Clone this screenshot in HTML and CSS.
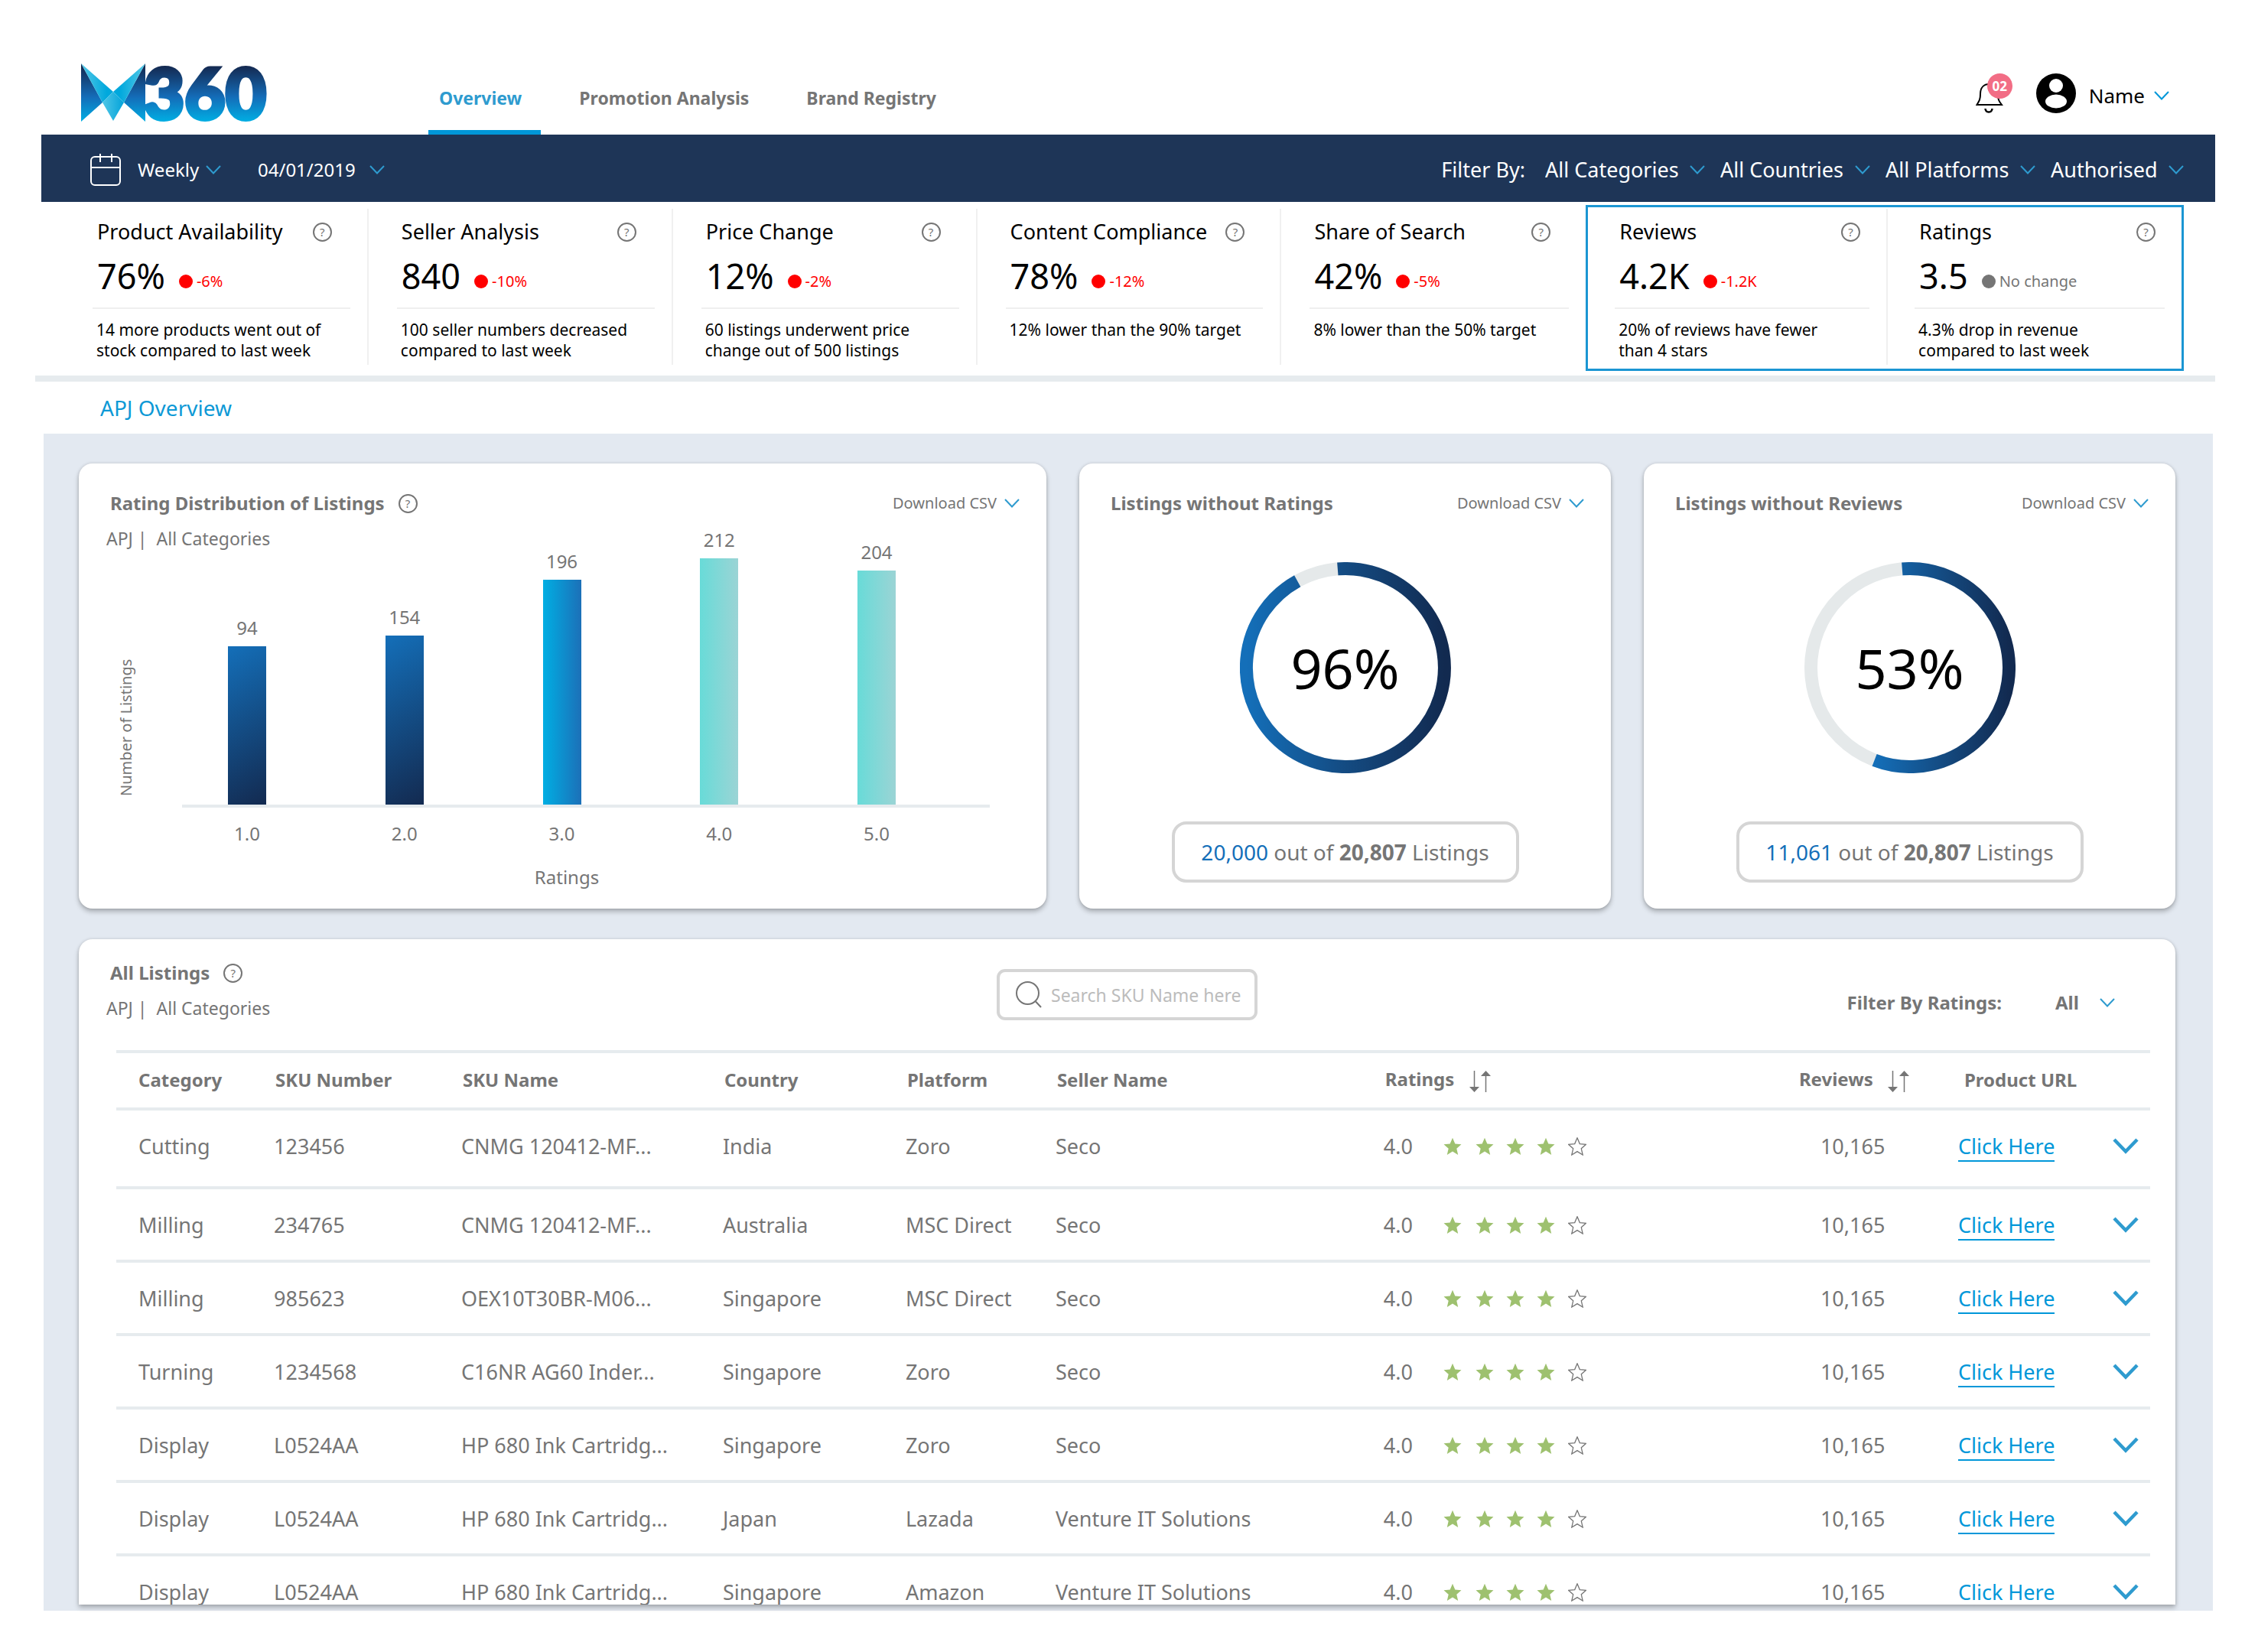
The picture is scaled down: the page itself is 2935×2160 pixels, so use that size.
FILE: index.html
```html
<!DOCTYPE html>
<html lang="en">
<head>
    <meta charset="UTF-8">
    <meta name="viewport" content="width=device-width, initial-scale=1.0">
    <title>M360 - Overview</title>
    <link rel="stylesheet" href="styles.css">
</head>
<body>
    <!-- shared icons -->
    <svg class="sprite" aria-hidden="true">
        <defs>
            <symbol id="chevron" viewBox="0 0 20 12">
                <path d="M1 1 L10 10.500 L19 1" fill="none" stroke="currentColor" stroke-width="2"/>
            </symbol>
            <symbol id="chevron-big" viewBox="0 0 34 21">
                <path d="M2 2 L17 17.500 L32 2" fill="none" stroke="currentColor" stroke-width="4.500"/>
            </symbol>
            <symbol id="sort" viewBox="0 0 28 28">
                <path d="M7 0 V22 M22 28 V6" stroke="currentColor" stroke-width="1.500"/>
                <path d="M0.500 21 H13.500 L7 28 Z M15.500 7 H28.500 L22 0 Z" fill="currentColor"/>
            </symbol>
            <symbol id="star" viewBox="0 0 24 24">
                <path d="M12 0.800 L15.300 8.600 L23.500 9.300 L17.300 14.800 L19.200 23 L12 18.600 L4.800 23 L6.700 14.800 L0.500 9.300 L8.700 8.600 Z"/>
            </symbol>
            <symbol id="rating-4" viewBox="0 0 188 24">
                <g fill="#9ec16f">
                    <use href="#star" x="0" width="24" height="24"/>
                    <use href="#star" x="42" width="24" height="24"/>
                    <use href="#star" x="82" width="24" height="24"/>
                    <use href="#star" x="122" width="24" height="24"/>
                </g>
                <use href="#star" x="163" width="24" height="24" fill="none" stroke="#757575" stroke-width="1.300"/>
            </symbol>
            <linearGradient id="ring" x1="0" x2="1" y1="0" y2="0">
                <stop offset="0" stop-color="#146fb9"/>
                <stop offset="0.500" stop-color="#144b82"/>
                <stop offset="1" stop-color="#122a50"/>
            </linearGradient>
        </defs>
    </svg>

    <header class="header">
        <a class="logo" href="#" aria-label="M360">
            <svg viewBox="0 0 256 80" width="256" height="80">
                <defs>
                    <linearGradient id="logoDark" gradientUnits="userSpaceOnUse" x1="0" y1="4" x2="0" y2="76">
                        <stop offset="0" stop-color="#142a52"/>
                        <stop offset="0.550" stop-color="#146cb8"/>
                        <stop offset="1" stop-color="#00aee3"/>
                    </linearGradient>
                    <linearGradient id="wingLeft" x1="0" x2="1" y1="0" y2="0">
                        <stop offset="0" stop-color="#54c8e6"/>
                        <stop offset="0.800" stop-color="#00a8dd"/>
                    </linearGradient>
                    <linearGradient id="wingRight" x1="1" x2="0" y1="0" y2="0">
                        <stop offset="0" stop-color="#54c8e6"/>
                        <stop offset="0.800" stop-color="#00a8dd"/>
                    </linearGradient>
                    <linearGradient id="wingMid" x1="0" x2="1" y1="0" y2="0">
                        <stop offset="0" stop-color="#4fc6e6"/>
                        <stop offset="1" stop-color="#03a3da"/>
                    </linearGradient>
                </defs>
                <path d="M0 0 L28 51 L0 76 Z M84 0 L56 51 L84 76 Z" fill="url(#logoDark)"/>
                <path d="M0 0 L42 37 L28 51 Z" fill="url(#wingLeft)"/>
                <path d="M84 0 L42 37 L56 51 Z" fill="url(#wingRight)"/>
                <path d="M42 37 L56 51 L42 75 L28 51 Z" fill="url(#wingMid)"/>
                <text class="logo-text" x="82" y="73" fill="url(#logoDark)" stroke="url(#logoDark)" stroke-width="5">360</text>
            </svg>
        </a>
        <nav class="tabs">
            <a class="tab active" href="#">Overview</a>
            <a class="tab" href="#">Promotion Analysis</a>
            <a class="tab" href="#">Brand Registry</a>
        </nav>
        <div class="user">
            <button class="bell" type="button" aria-label="Notifications">
                <svg viewBox="0 0 36 40" width="36" height="40" fill="none" stroke="#000" stroke-width="2">
                    <path d="M1.500 28 H34 C30 23 29 21 29 14 C29 5 24 1 17.500 1 C11 1 6 5 6 14 C6 21 4.500 23 1.500 28 Z"/>
                    <path d="M12.500 33 C13 39 21 39 21.500 33" stroke-width="2.500"/>
                </svg>
                <span class="badge">02</span>
            </button>
            <svg class="avatar" viewBox="0 0 52 52" width="52" height="52">
                <circle cx="26" cy="26" r="26"/>
                <circle cx="26" cy="16" r="9" fill="#fff"/>
                <ellipse cx="26" cy="36.500" rx="14" ry="9" fill="#fff"/>
            </svg>
            <button class="name" type="button">Name <svg class="chev"><use href="#chevron"/></svg></button>
        </div>
    </header>

    <div class="filter-bar">
        <svg class="calendar" viewBox="0 0 40 42" width="40" height="42" fill="none" stroke="#fff" stroke-width="2">
            <rect x="1" y="4" width="38" height="37" rx="5"/>
            <path d="M1 18 H39 M13 0 V11 M28 0 V11"/>
        </svg>
        <label class="picker period">
            <select aria-label="Period"><option>Weekly</option></select>
            <svg class="chev"><use href="#chevron"/></svg>
        </label>
        <label class="picker date">
            <select aria-label="Date"><option>04/01/2019</option></select>
            <svg class="chev"><use href="#chevron"/></svg>
        </label>
        <div class="filters">
            <span class="filters-label">Filter By:</span>
            <label class="picker">
                <select aria-label="Categories"><option>All Categories</option></select>
                <svg class="chev"><use href="#chevron"/></svg>
            </label>
            <label class="picker">
                <select aria-label="Countries"><option>All Countries</option></select>
                <svg class="chev"><use href="#chevron"/></svg>
            </label>
            <label class="picker">
                <select aria-label="Platforms"><option>All Platforms</option></select>
                <svg class="chev"><use href="#chevron"/></svg>
            </label>
            <label class="picker">
                <select aria-label="Sellers"><option>Authorised</option></select>
                <svg class="chev"><use href="#chevron"/></svg>
            </label>
        </div>
    </div>

    <section class="kpis">
        <div class="kpi">
            <div class="kpi-title">Product Availability <button class="help" type="button">?</button></div>
            <div class="kpi-value">76% <span class="delta">-6%</span></div>
            <p>14 more products went out of<br>stock compared to last week</p>
        </div>
        <div class="kpi">
            <div class="kpi-title">Seller Analysis <button class="help" type="button">?</button></div>
            <div class="kpi-value">840 <span class="delta">-10%</span></div>
            <p>100 seller numbers decreased<br>compared to last week</p>
        </div>
        <div class="kpi">
            <div class="kpi-title">Price Change <button class="help" type="button">?</button></div>
            <div class="kpi-value">12% <span class="delta">-2%</span></div>
            <p>60 listings underwent price<br>change out of 500 listings</p>
        </div>
        <div class="kpi">
            <div class="kpi-title">Content Compliance <button class="help" type="button">?</button></div>
            <div class="kpi-value">78% <span class="delta">-12%</span></div>
            <p>12% lower than the 90% target</p>
        </div>
        <div class="kpi">
            <div class="kpi-title">Share of Search <button class="help" type="button">?</button></div>
            <div class="kpi-value">42% <span class="delta">-5%</span></div>
            <p>8% lower than the 50% target</p>
        </div>
        <div class="kpi-selected">
            <div class="kpi">
                <div class="kpi-title">Reviews <button class="help" type="button">?</button></div>
                <div class="kpi-value">4.2K <span class="delta">-1.2K</span></div>
                <p>20% of reviews have fewer<br>than 4 stars</p>
            </div>
            <div class="kpi">
                <div class="kpi-title">Ratings <button class="help" type="button">?</button></div>
                <div class="kpi-value">3.5 <span class="delta same">No change</span></div>
                <p>4.3% drop in revenue<br>compared to last week</p>
            </div>
        </div>
    </section>

    <h1 class="page-title">APJ Overview</h1>

    <main class="main">
        <div class="charts">
            <section class="card">
                <div class="card-head">
                    <h2>Rating Distribution of Listings</h2>
                    <button class="help" type="button">?</button>
                    <button class="download" type="button">Download CSV <svg class="chev"><use href="#chevron"/></svg></button>
                </div>
                <div class="scope">APJ |&nbsp; All Categories</div>
                <div class="chart">
                    <div class="y-title">Number of Listings</div>
                    <div class="plot">
                        <div class="bars">
                            <div class="bar navy" style="height: 207px"><span>94</span></div>
                            <div class="bar navy" style="height: 221px"><span>154</span></div>
                            <div class="bar blue" style="height: 294px"><span>196</span></div>
                            <div class="bar teal" style="height: 322px"><span>212</span></div>
                            <div class="bar teal" style="height: 306px"><span>204</span></div>
                        </div>
                        <div class="ticks">
                            <span>1.0</span>
                            <span>2.0</span>
                            <span>3.0</span>
                            <span>4.0</span>
                            <span>5.0</span>
                        </div>
                        <div class="x-title">Ratings</div>
                    </div>
                </div>
            </section>

            <section class="card">
                <div class="card-head">
                    <h2>Listings without Ratings</h2>
                    <button class="download" type="button">Download CSV <svg class="chev"><use href="#chevron"/></svg></button>
                </div>
                <div class="donut">
                    <svg viewBox="0 0 276 276">
                        <circle cx="138" cy="138" r="129.500" fill="none" stroke="#e5e9ea" stroke-width="17"/>
                        <path d="M127.800 8.900 A129.500 129.500 0 1 1 75.200 24.700" fill="none" stroke="url(#ring)" stroke-width="17"/>
                    </svg>
                    <span>96%</span>
                </div>
                <div class="count"><em>20,000</em> out of <b>20,807</b> Listings</div>
            </section>

            <section class="card">
                <div class="card-head">
                    <h2>Listings without Reviews</h2>
                    <button class="download" type="button">Download CSV <svg class="chev"><use href="#chevron"/></svg></button>
                </div>
                <div class="donut">
                    <svg viewBox="0 0 276 276">
                        <circle cx="138" cy="138" r="129.500" fill="none" stroke="#e5e9ea" stroke-width="17"/>
                        <path d="M127.800 8.900 A129.500 129.500 0 1 1 91.600 258.900" fill="none" stroke="url(#ring)" stroke-width="17"/>
                    </svg>
                    <span>53%</span>
                </div>
                <div class="count"><em>11,061</em> out of <b>20,807</b> Listings</div>
            </section>
        </div>

        <section class="card listings">
            <div class="listings-head">
                <div>
                    <div class="card-head">
                        <h2>All Listings</h2>
                        <button class="help" type="button">?</button>
                    </div>
                    <div class="scope">APJ |&nbsp; All Categories</div>
                </div>
                <label class="search">
                    <svg viewBox="0 0 34 35" width="34" height="35" fill="none" stroke="#757575" stroke-width="2">
                        <circle cx="15.500" cy="15.500" r="14.500"/>
                        <path d="M26 26.500 L33 34"/>
                    </svg>
                    <input type="text" placeholder="Search SKU Name here" aria-label="Search SKU Name">
                </label>
                <div class="rating-filter">
                    <label for="ratingFilter">Filter By Ratings:</label>
                    <span class="picker">
                        <select id="ratingFilter"><option>All</option></select>
                        <svg class="chev"><use href="#chevron"/></svg>
                    </span>
                </div>
            </div>
            <table>
                <colgroup>
                    <col class="c-category">
                    <col class="c-number">
                    <col class="c-name">
                    <col class="c-country">
                    <col class="c-platform">
                    <col class="c-seller">
                    <col class="c-ratings">
                    <col class="c-reviews">
                    <col class="c-url">
                    <col class="c-more">
                </colgroup>
                <thead>
                    <tr>
                        <th>Category</th>
                        <th>SKU Number</th>
                        <th>SKU Name</th>
                        <th>Country</th>
                        <th>Platform</th>
                        <th>Seller Name</th>
                        <th>Ratings <svg class="sort"><use href="#sort"/></svg></th>
                        <th>Reviews <svg class="sort"><use href="#sort"/></svg></th>
                        <th colspan="2" class="th-url">Product URL</th>
                    </tr>
                </thead>
                <tbody>
                    <tr>
                        <td>Cutting</td>
                        <td>123456</td>
                        <td>CNMG 120412-MF...</td>
                        <td>India</td>
                        <td>Zoro</td>
                        <td>Seco</td>
                        <td>4.0 <svg class="stars"><use href="#rating-4"/></svg></td>
                        <td class="reviews">10,165</td>
                        <td><a href="#">Click Here</a></td>
                        <td><button class="more" type="button" aria-label="Expand"><svg><use href="#chevron-big"/></svg></button></td>
                    </tr>
                    <tr>
                        <td>Milling</td>
                        <td>234765</td>
                        <td>CNMG 120412-MF...</td>
                        <td>Australia</td>
                        <td>MSC Direct</td>
                        <td>Seco</td>
                        <td>4.0 <svg class="stars"><use href="#rating-4"/></svg></td>
                        <td class="reviews">10,165</td>
                        <td><a href="#">Click Here</a></td>
                        <td><button class="more" type="button" aria-label="Expand"><svg><use href="#chevron-big"/></svg></button></td>
                    </tr>
                    <tr>
                        <td>Milling</td>
                        <td>985623</td>
                        <td>OEX10T30BR-M06...</td>
                        <td>Singapore</td>
                        <td>MSC Direct</td>
                        <td>Seco</td>
                        <td>4.0 <svg class="stars"><use href="#rating-4"/></svg></td>
                        <td class="reviews">10,165</td>
                        <td><a href="#">Click Here</a></td>
                        <td><button class="more" type="button" aria-label="Expand"><svg><use href="#chevron-big"/></svg></button></td>
                    </tr>
                    <tr>
                        <td>Turning</td>
                        <td>1234568</td>
                        <td>C16NR AG60 Inder...</td>
                        <td>Singapore</td>
                        <td>Zoro</td>
                        <td>Seco</td>
                        <td>4.0 <svg class="stars"><use href="#rating-4"/></svg></td>
                        <td class="reviews">10,165</td>
                        <td><a href="#">Click Here</a></td>
                        <td><button class="more" type="button" aria-label="Expand"><svg><use href="#chevron-big"/></svg></button></td>
                    </tr>
                    <tr>
                        <td>Display</td>
                        <td>L0524AA</td>
                        <td>HP 680 Ink Cartridg...</td>
                        <td>Singapore</td>
                        <td>Zoro</td>
                        <td>Seco</td>
                        <td>4.0 <svg class="stars"><use href="#rating-4"/></svg></td>
                        <td class="reviews">10,165</td>
                        <td><a href="#">Click Here</a></td>
                        <td><button class="more" type="button" aria-label="Expand"><svg><use href="#chevron-big"/></svg></button></td>
                    </tr>
                    <tr>
                        <td>Display</td>
                        <td>L0524AA</td>
                        <td>HP 680 Ink Cartridg...</td>
                        <td>Japan</td>
                        <td>Lazada</td>
                        <td>Venture IT Solutions</td>
                        <td>4.0 <svg class="stars"><use href="#rating-4"/></svg></td>
                        <td class="reviews">10,165</td>
                        <td><a href="#">Click Here</a></td>
                        <td><button class="more" type="button" aria-label="Expand"><svg><use href="#chevron-big"/></svg></button></td>
                    </tr>
                    <tr>
                        <td>Display</td>
                        <td>L0524AA</td>
                        <td>HP 680 Ink Cartridg...</td>
                        <td>Singapore</td>
                        <td>Amazon</td>
                        <td>Venture IT Solutions</td>
                        <td>4.0 <svg class="stars"><use href="#rating-4"/></svg></td>
                        <td class="reviews">10,165</td>
                        <td><a href="#">Click Here</a></td>
                        <td><button class="more" type="button" aria-label="Expand"><svg><use href="#chevron-big"/></svg></button></td>
                    </tr>
                </tbody>
            </table>
        </section>
    </main>
</body>
</html>
```

FILE: styles.css
```css
* {
    box-sizing: border-box;
}
body {
    margin: 0;
    height: 100vh;
    padding: 0 39px 54px 54px;
    display: flex;
    flex-direction: column;
    overflow: hidden;
    background-color: #fff;
    color: #757575;
    font-family: "Noto Sans", "Open Sans", sans-serif;
    font-size: 27px;
}
h1, h2, p {
    margin: 0;
}
button, select, input {
    font: inherit;
    color: inherit;
    background: none;
    border: none;
    padding: 0;
    margin: 0;
}
button {
    cursor: pointer;
}
select {
    appearance: none;
}
svg {
    flex-shrink: 0;
}
.sprite {
    position: absolute;
    width: 0;
    height: 0;
}
.chev {
    width: 20px;
    height: 12px;
    color: #2e9bcf;
}

/* header */
.header {
    height: 176px;
    flex-shrink: 0;
    display: flex;
    padding: 0 60px 0 52px;
}
.logo {
    padding-top: 83px;
}
.logo svg {
    display: block;
    overflow: visible;
}
.logo-text {
    font-family: Lato, sans-serif;
    font-weight: 900;
    font-size: 92px;
}
.tabs {
    display: flex;
    gap: 36px;
    margin-left: 198px;
}
.tab {
    padding: 112px 25px 0 14px;
    font-size: 23px;
    line-height: 32px;
    font-weight: bold;
    color: #757575;
    text-decoration: none;
}
.tab.active {
    color: #2e9bcf;
    border-bottom: 6px solid #0097d9;
}
.user {
    margin-left: auto;
    padding-top: 96px;
    display: flex;
    align-items: flex-start;
}
.bell {
    position: relative;
    padding-top: 13px;
    line-height: 0;
}
.badge {
    position: absolute;
    top: 0;
    left: 15px;
    width: 33px;
    height: 33px;
    border-radius: 50%;
    background-color: #f26d85;
    color: #fff;
    font-size: 17px;
    font-weight: bold;
    line-height: 33px;
}
.avatar {
    margin-left: 43px;
}
.name {
    display: flex;
    align-items: center;
    gap: 12px;
    margin-left: 17px;
    line-height: 58px;
    font-size: 26px;
    color: #000;
}
.name .chev {
    color: #0097d9;
}

/* filter bar */
.filter-bar {
    height: 88px;
    flex-shrink: 0;
    display: flex;
    align-items: center;
    padding: 3px 41px 0 64px;
    background-color: #1e3557;
    color: #fff;
}
.picker {
    display: flex;
    align-items: center;
    gap: 14px;
}
.period {
    margin-left: 22px;
    gap: 8px;
    font-size: 24px;
}
.date {
    margin-left: 48px;
    gap: 18px;
    font-size: 24px;
}
.filters {
    margin-left: auto;
    display: flex;
    align-items: center;
    gap: 20px;
}
.filters-label {
    margin-right: 6px;
}

/* kpi strip */
.kpis {
    flex-shrink: 0;
    display: grid;
    grid-template-columns: repeat(5, 398fr) 782fr;
    margin-left: -8px;
    padding: 4px 41px 6px 38px;
    border-bottom: 8px solid #e6ebee;
    color: #000;
}
.kpi {
    margin: 5px 0 8px;
    padding: 12px 22px 5px 37px;
    border-right: 2px solid #f0f0f0;
}
.kpi:nth-child(5),
.kpi-selected .kpi:last-child {
    border-right: none;
}
.kpi-selected {
    display: grid;
    grid-template-columns: 395fr 387fr;
    border: 3px solid #1b96d3;
}
.kpi-selected .kpi {
    margin: 2px 0 5px;
    padding-left: 35px;
}
.kpi-title {
    display: flex;
    align-items: center;
    justify-content: space-between;
    padding: 0 24px 0 6px;
    line-height: 36px;
}
.kpi-selected .kpi-title {
    padding-right: 12px;
}
.kpi-value {
    display: flex;
    align-items: center;
    gap: 18px;
    padding: 8px 0 9px 6px;
    border-bottom: 2px solid #efefef;
    font-size: 45px;
    line-height: 64px;
}
.kpi p {
    padding: 14px 0 0 5px;
    font-size: 21px;
    line-height: 27px;
}
.delta {
    display: flex;
    align-items: center;
    gap: 5px;
    padding-top: 13px;
    font-size: 20px;
    line-height: 20px;
    color: #f00;
}
.delta::before {
    content: "";
    width: 18px;
    height: 18px;
    border-radius: 50%;
    background-color: currentColor;
}
.delta.same {
    color: #757575;
}
.help {
    width: 25px;
    height: 25px;
    border: 2px solid #757575;
    border-radius: 50%;
    font-size: 15px;
    line-height: 20px;
    text-align: center;
    color: #757575;
}
.page-title {
    flex-shrink: 0;
    padding-left: 77px;
    font-size: 28px;
    font-weight: normal;
    line-height: 68px;
    color: #0d99d6;
}

/* cards */
.main {
    flex: 1;
    min-height: 0;
    display: flex;
    flex-direction: column;
    gap: 40px;
    margin: 0 3px;
    padding: 39px 49px 8px 46px;
    background-color: #e3e9f1;
}
.charts {
    flex-shrink: 0;
    display: grid;
    grid-template-columns: 1265fr 695fr 695fr;
    gap: 43px;
}
.card {
    background-color: #fff;
    border-radius: 18px;
    box-shadow: 0 4px 6px rgba(0, 0, 0, 0.25), 0 0 4px rgba(0, 0, 0, 0.12);
}
.card-head {
    display: flex;
    align-items: center;
    padding: 34px 35px 0 41px;
    line-height: 36px;
}
.card-head h2 {
    font-size: 24px;
    font-weight: bold;
}
.card-head .help {
    margin-left: 18px;
}
.download {
    display: flex;
    align-items: center;
    gap: 10px;
    margin-left: auto;
    font-size: 20px;
}
.scope {
    padding: 11px 0 0 36px;
    font-size: 23px;
    line-height: 34px;
}

/* bar chart */
.chart {
    display: flex;
    font-size: 24px;
    padding: 0 74px 25px 46px;
}
.y-title {
    writing-mode: vertical-rl;
    transform: rotate(180deg);
    width: 32px;
    height: 320px;
    font-size: 20px;
    line-height: 32px;
}
.plot {
    flex: 1;
    margin-left: 57px;
}
.bars,
.ticks {
    display: flex;
    justify-content: space-between;
    padding: 0 123px 0 60px;
}
.bars {
    align-items: flex-end;
    height: 335px;
    border-bottom: 4px solid #e6ebee;
}
.bar {
    width: 50px;
    text-align: center;
    line-height: 32px;
}
.bar span {
    display: block;
    margin-top: -40px;
}
.bar.navy {
    background-image: linear-gradient(150deg, #146fb9, #132a50);
}
.bar.blue {
    background-image: linear-gradient(to right, #00aee3, #1c70b8);
}
.bar.teal {
    background-image: linear-gradient(to right, #68dbd8, #9bd4d5);
}
.ticks {
    padding-top: 18px;
    line-height: 32px;
}
.ticks span {
    width: 50px;
    text-align: center;
}
.x-title {
    padding: 25px 50px 0 0;
    text-align: center;
    line-height: 32px;
}

/* donuts */
.donut {
    position: relative;
    width: 276px;
    margin: 59px auto 0;
}
.donut svg {
    display: block;
    width: 100%;
}
.donut span {
    position: absolute;
    inset: 0;
    display: flex;
    align-items: center;
    justify-content: center;
    font-size: 72px;
    color: #000;
}
.count {
    width: 454px;
    margin: 63px auto 0;
    border: 4px solid #d5d5d5;
    border-radius: 19px;
    font-size: 28px;
    text-align: center;
    line-height: 72px;
}
.count em {
    font-style: normal;
    color: #146fb9;
}

/* listings */
.listings {
    flex: 1;
    min-height: 0;
    overflow: hidden;
    border-radius: 18px 18px 0 0;
}
.listings-head {
    display: grid;
    grid-template-columns: 1fr auto 1fr;
    height: 145px;
}
.listings-head .card-head {
    padding-top: 26px;
}
.search {
    display: flex;
    align-items: center;
    gap: 12px;
    width: 341px;
    height: 67px;
    margin-top: 39px;
    padding: 0 12px 0 21px;
    border: 4px solid #d5d5d5;
    border-radius: 11px;
}
.search input {
    width: 100%;
    font-size: 23px;
    outline: none;
}
.search input::placeholder {
    color: #bcbcbc;
}
.rating-filter {
    display: flex;
    justify-content: flex-end;
    gap: 70px;
    padding: 66px 79px 0 0;
    height: 100px;
    font-size: 24px;
    font-weight: bold;
    line-height: 34px;
}
.rating-filter .picker {
    gap: 27px;
}
table {
    width: calc(100% - 82px);
    margin: 0 33px 0 49px;
    table-layout: fixed;
    border-collapse: separate;
    border-spacing: 0;
    border-top: 4px solid #e6ebee;
}
.c-category { width: 7.75%; }
.c-number { width: 9.21%; }
.c-name { width: 12.86%; }
.c-country { width: 8.99%; }
.c-platform { width: 7.37%; }
.c-seller { width: 16.13%; }
.c-ratings { width: 20.35%; }
.c-reviews { width: 7.9%; }
.c-url { width: 7.6%; }
.c-more { width: 1.84%; }
th, td {
    padding: 0;
    border-bottom: 4px solid #e6ebee;
    text-align: left;
    white-space: nowrap;
}
th {
    height: 75px;
    padding: 0 0 3px 2px;
    font-size: 24px;
}
td {
    height: 96px;
}
tbody tr:first-child td {
    height: 103px;
    padding-bottom: 6px;
}
th:first-child,
td:first-child {
    padding-left: 29px;
}
.th-url {
    padding-left: 8px;
}
.reviews {
    padding-left: 30px;
}
.sort {
    width: 29px;
    height: 28px;
    margin-left: 12px;
    vertical-align: middle;
}
.stars {
    width: 188px;
    height: 24px;
    margin-left: 33px;
    vertical-align: -2px;
}
td a {
    color: #0097d9;
    text-decoration: none;
    border-bottom: 2px solid #0097d9;
}
.more {
    display: block;
    color: #2e9bcf;
}
.more svg {
    display: block;
    width: 34px;
    height: 21px;
}
```
